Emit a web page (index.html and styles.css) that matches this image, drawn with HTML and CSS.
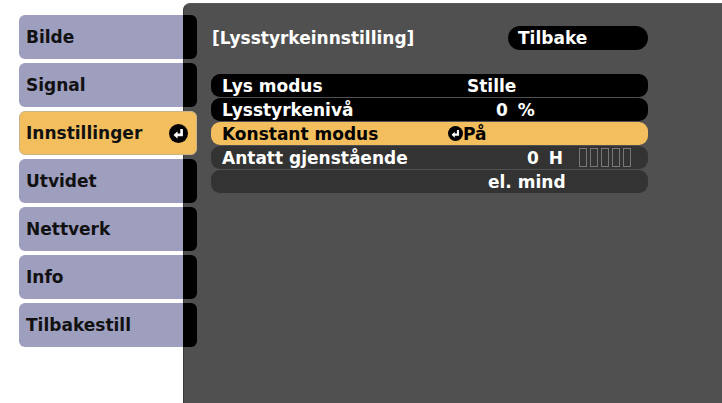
FILE: index.html
```html
<!DOCTYPE html>
<html lang="no">
<head>
    <meta charset="UTF-8">
    <meta name="viewport" content="width=device-width, initial-scale=1.0">
    <link rel="stylesheet" href="styles.css">
    <title>Lysstyrkeinnstilling</title>
</head>
<body>
    <div class="osd">
        <ul class="menu">
            <li class="tab">Bilde</li>
            <li class="tab">Signal</li>
            <li class="tab active">Innstillinger
                <svg class="enter enter-tab" viewBox="0 0 16 16">
                    <circle cx="8" cy="8" r="8" fill="#000"/>
                    <path d="M10.6 4.2 V9.2 H6.5" fill="none" stroke="#fff" stroke-width="2.2"/>
                    <path d="M3.8 9.2 L7.2 6 L7.2 12.4 Z" fill="#fff"/>
                </svg>
            </li>
            <li class="tab">Utvidet</li>
            <li class="tab">Nettverk</li>
            <li class="tab">Info</li>
            <li class="tab">Tilbakestill</li>
        </ul>

        <div class="panel">
            <div class="panel-head">
                <span class="title">[Lysstyrkeinnstilling]</span>
                <span class="back">Tilbake</span>
            </div>

            <div class="rows">
                <div class="row row-black">
                    <span class="label">Lys modus</span>
                    <span class="value v-stille">Stille</span>
                </div>
                <div class="row row-black">
                    <span class="label">Lysstyrkenivå</span>
                    <span class="value v-percent">0 %</span>
                </div>
                <div class="row row-active">
                    <span class="label">Konstant modus</span>
                    <span class="value v-on">
                        <svg class="enter enter-row" viewBox="0 0 16 16">
                            <circle cx="8" cy="8" r="8" fill="#000"/>
                            <path d="M10.6 4.2 V9.2 H6.5" fill="none" stroke="#fff" stroke-width="2.2"/>
                            <path d="M3.8 9.2 L7.2 6 L7.2 12.4 Z" fill="#fff"/>
                        </svg>På
                    </span>
                </div>
                <div class="row row-dim">
                    <span class="label">Antatt gjenstående</span>
                    <span class="value v-hours">0 H</span>
                    <span class="gauge">
                        <i></i><i></i><i></i><i></i><i></i>
                    </span>
                </div>
                <div class="row row-dim">
                    <span class="label"></span>
                    <span class="value v-less">el. mind</span>
                </div>
            </div>
        </div>
    </div>
</body>
</html>
```

FILE: styles.css
```css
body {
    margin: 0;
    background-color: #fff;
    font-family: "DejaVu Sans", Verdana, sans-serif;
    font-weight: bold;
    font-size: 17px;
}

.osd {
    display: flex;
    height: 403px;
    overflow: hidden;
}

/* left menu */
.menu {
    list-style: none;
    margin: 15px -14px 0 19px;
    padding: 0;
    width: 178px;
    flex-shrink: 0;
    display: flex;
    flex-direction: column;
    gap: 4px;
    position: relative;
    z-index: 1;
}

.tab {
    height: 44px;
    box-sizing: border-box;
    display: flex;
    align-items: center;
    padding-left: 7px;
    background-color: #9e9ebf;
    border-right: 14px solid #000;
    border-radius: 6px;
    color: #111;
}

.tab.active {
    justify-content: space-between;
    padding-right: 8px;
    padding-left: 6px;
    background-color: #f3be5e;
    border: 1px solid #c8b48a;
}

.enter {
    display: block;
}

.enter-tab {
    width: 19px;
    height: 19px;
}

.enter-row {
    width: 15px;
    height: 15px;
}

/* right panel */
.panel {
    flex: 1;
    margin-top: 3px;
    padding: 22px 74px 0 27px;
    background-color: #505050;
    border-left: 1px solid #3a3a3a;
    border-top: 1px solid #5a5a5a;
    border-radius: 7px 0 0 0;
    color: #fff;
}

.panel-head {
    display: flex;
    justify-content: space-between;
    align-items: center;
    height: 24px;
}

.title {
    padding-left: 1px;
}

.back {
    width: 140px;
    height: 24px;
    box-sizing: border-box;
    padding-left: 10px;
    line-height: 24px;
    background-color: #000;
    border-radius: 12px;
}

.rows {
    margin-top: 24px;
}

.row {
    height: 23px;
    margin-bottom: 1px;
    display: flex;
    align-items: center;
    padding-left: 11px;
    border-radius: 9px;
}

.row-black {
    background-color: #000;
}

.row-active {
    background-color: #f3be5e;
    color: #000;
}

.row-dim {
    background-color: #333;
}

.label {
    width: 226px;
    flex-shrink: 0;
}

.v-stille { margin-left: 19px; }
.v-percent { margin-left: 48px; word-spacing: 4px; }
.v-on { display: flex; align-items: center; }
.v-hours { margin-left: 79px; word-spacing: 4px; }
.v-less { margin-left: 40px; }

.gauge {
    display: flex;
    gap: 3px;
    margin-left: 16px;
}

.gauge i {
    width: 6px;
    height: 17px;
    border: 1px solid #777;
}
```
